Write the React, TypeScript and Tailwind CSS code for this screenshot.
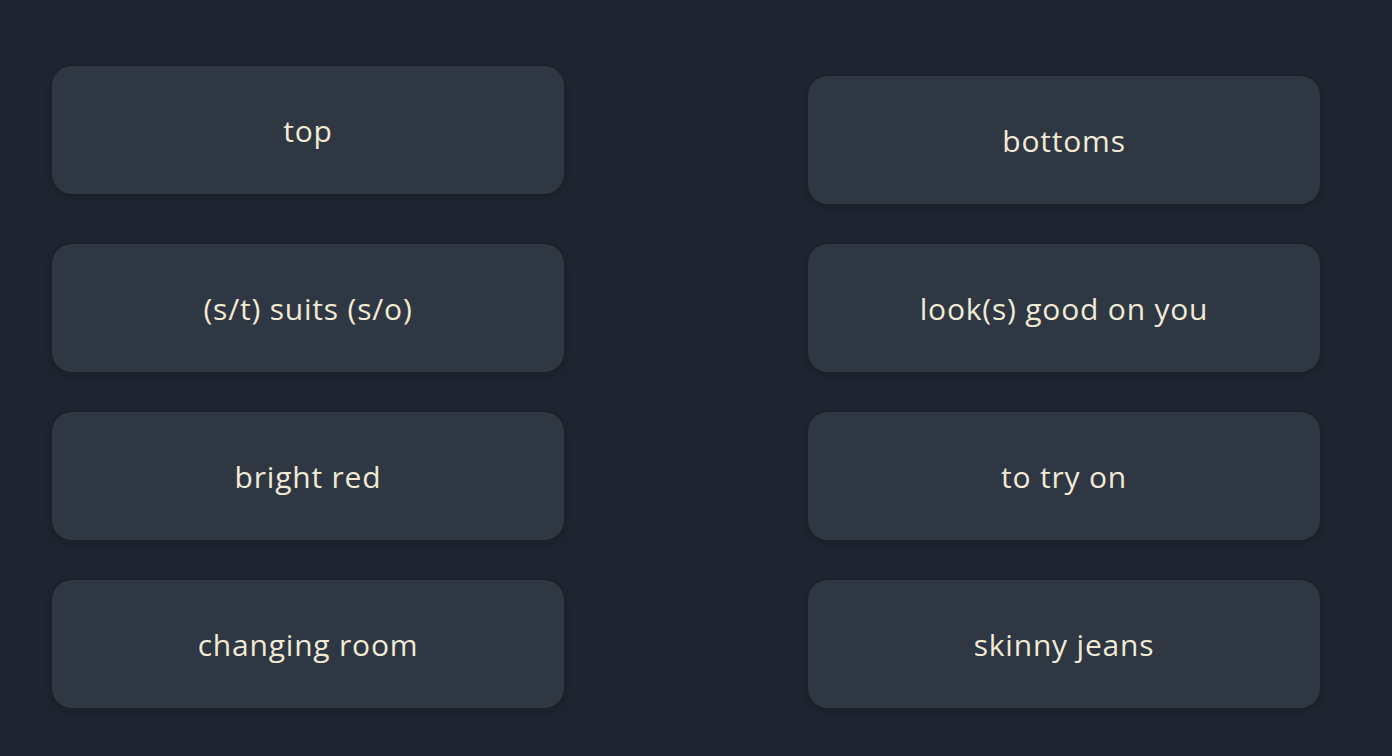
const LEFT = ['top', '(s/t) suits (s/o)', 'bright red', 'changing room'];
const RIGHT = ['bottoms', 'look(s) good on you', 'to try on', 'skinny jeans'];

function Card({ text, lifted }: { text: string; lifted?: boolean }) {
  return (
    <div
      className={`flex h-[128px] w-[512px] items-center justify-center rounded-[20px] bg-[#2e3742] shadow-[0_2px_8px_rgba(0,0,0,0.18)] ${lifted ? 'mb-[10px]' : ''}`}
    >
      <span
        className="text-[30px] tracking-[0.8px] text-[#f1ead6]"
        style={{ fontFamily: '"Open Sans", Lato, sans-serif' }}
      >
        {text}
      </span>
    </div>
  );
}

export default function App() {
  return (
    <div className="flex h-[756px] w-full bg-[#1e2430] pl-[52px]">
      <div className="flex flex-col gap-10 pt-[66px]">
        {LEFT.map((t, i) => (
          <Card key={t} text={t} lifted={i === 0} />
        ))}
      </div>
      <div className="ml-[244px] flex flex-col gap-10 pt-[76px]">
        {RIGHT.map((t) => (
          <Card key={t} text={t} />
        ))}
      </div>
    </div>
  );
}
